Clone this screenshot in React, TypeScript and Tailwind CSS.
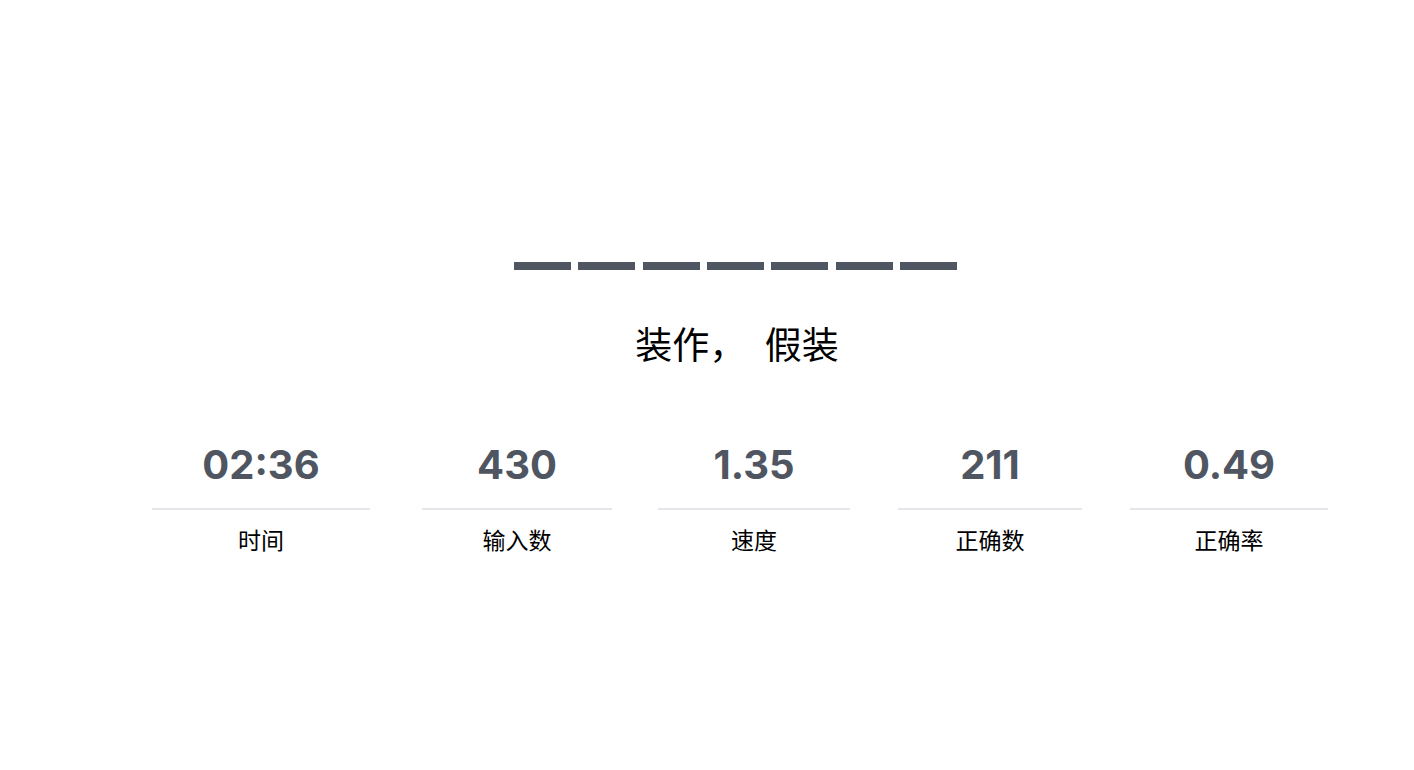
import React from "react";

const stats = [
  { value: "02:36", label: "时间", w: "w-[218px]", ml: "ml-0" },
  { value: "430", label: "输入数", w: "w-[190px]", ml: "ml-[52px]" },
  { value: "1.35", label: "速度", w: "w-[192px]", ml: "ml-[46px]" },
  { value: "211", label: "正确数", w: "w-[184px]", ml: "ml-[48px]" },
  { value: "0.49", label: "正确率", w: "w-[198px]", ml: "ml-[48px]" },
];

export default function App() {
  return (
    <div
      className="w-full h-[770px] bg-white flex flex-col"
      style={{ fontFamily: '"Liberation Sans", "Noto Sans CJK SC", sans-serif' }}
    >
      <div className="pt-[262px] pl-[514px] flex gap-[7.33px]">
        {Array.from({ length: 7 }).map((_, i) => (
          <div key={i} className="w-[57px] h-[8px] bg-[#4f5661]" />
        ))}
      </div>
      <div
        className="mt-[55px] pl-[60px] flex justify-center text-[37px] leading-none text-black whitespace-pre"
        style={{ fontFamily: '"Noto Sans CJK SC", sans-serif' }}
      >
        {"装作，\u2002假装"}
      </div>
      <div className="mt-[83px] pl-[152px] flex">
        {stats.map((s) => (
          <div key={s.label} className={`${s.w} ${s.ml} flex flex-col items-center`}>
            <div
              className="text-[40px] leading-none font-bold text-[#4f5661] h-[40px]"
              style={{ fontFamily: 'Inter, "Liberation Sans", sans-serif' }}
            >
              {s.value}
            </div>
            <div className="mt-[23px] w-full h-[2px] bg-[#e5e6ea]" />
            <div
              className="mt-[18px] text-[23px] leading-none text-black"
              style={{ fontFamily: '"Noto Sans CJK SC", sans-serif' }}
            >
              {s.label}
            </div>
          </div>
        ))}
      </div>
    </div>
  );
}
